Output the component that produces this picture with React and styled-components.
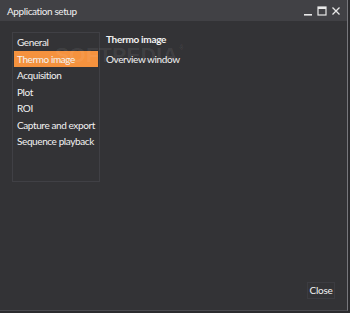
import React, { useState } from "react";
import styled, { createGlobalStyle } from "styled-components";

const Global = createGlobalStyle`
  html, body { margin: 0; padding: 0; background: #2b2b2e; }
  body { font-family: Lato, "Noto Sans", sans-serif; }
`;

const Window = styled.div`
  width: 347px;
  height: 310px;
  border-right: 1px solid #77777c;
  border-bottom: 1px solid #4a4a4f;
  background: #333336;
  display: flex;
  flex-direction: column;
  position: relative;
  overflow: hidden;
`;

const TitleBar = styled.div`
  height: 21px;
  background: #414145;
  display: flex;
  align-items: center;
  padding: 0 6px 0 7px;
  color: #f0f0f0;
  font-size: 10px;
  letter-spacing: -0.4px;
`;

const Title = styled.div`
  flex: 1;
  padding-top: 1px;
`;

const Controls = styled.div`
  display: flex;
  align-items: center;
  gap: 4px;
`;

const Body = styled.div`
  flex: 1;
  display: flex;
  padding: 11px 0 0 12px;
  gap: 6px;
  position: relative;
`;

const Nav = styled.div`
  width: 84px;
  height: 147px;
  border: 1px solid #404045;
  padding: 1px 1px 0 1px;
  display: flex;
  flex-direction: column;
`;

const NavItem = styled.div`
  height: 16.5px;
  line-height: 16.5px;
  padding-left: 3px;
  font-size: 10px;
  letter-spacing: -0.4px;
  color: #f2f2f2;
  white-space: nowrap;
  background: ${(p) => (p.$active ? "#f5923e" : "transparent")};
`;

const Content = styled.div`
  display: flex;
  flex-direction: column;
`;

const Heading = styled.div`
  font-size: 10px;
  letter-spacing: -0.3px;
  font-weight: 700;
  color: #f2f2f2;
  line-height: 14px;
`;

const Link = styled.div`
  font-size: 10px;
  letter-spacing: -0.4px;
  color: #f2f2f2;
  margin-top: 6px;
  line-height: 14px;
`;

const CloseButton = styled.button`
  position: absolute;
  right: 12px;
  bottom: 11px;
  height: 17px;
  width: 28px;
  padding: 0;
  background: #333336;
  border: 1px solid #3c3c41;
  color: #f2f2f2;
  font-family: inherit;
  font-size: 10px;
  letter-spacing: -0.3px;
  line-height: 15px;
`;

const Watermark = styled.div`
  position: absolute;
  left: 55px;
  top: 23px;
  font-family: "Liberation Sans", sans-serif;
  font-weight: 700;
  font-size: 21px;
  line-height: 21px;
  letter-spacing: 0.3px;
  color: rgba(255, 255, 255, 0.08);
  pointer-events: none;
  sup {
    font-size: 7px;
    vertical-align: top;
    line-height: 7px;
    margin-left: 1px;
  }
`;

const items = [
  "General",
  "Thermo image",
  "Acquisition",
  "Plot",
  "ROI",
  "Capture and export",
  "Sequence playback",
];

export default function App() {
  const [active, setActive] = useState(1);
  return (
    <>
      <Global />
      <Window>
        <TitleBar>
          <Title>Application setup</Title>
          <Controls>
            <svg width="10" height="10" viewBox="0 0 10 10">
              <rect x="1" y="8" width="8" height="1.6" fill="#e8e8e8" />
            </svg>
            <svg width="10" height="10" viewBox="0 0 10 10">
              <rect x="1" y="1" width="8" height="8" fill="none" stroke="#e8e8e8" strokeWidth="1.2" />
              <rect x="1" y="1" width="8" height="2" fill="#e8e8e8" />
            </svg>
            <svg width="10" height="10" viewBox="0 0 10 10">
              <path d="M1.5 1.5 L8.5 8.5 M8.5 1.5 L1.5 8.5" stroke="#e8e8e8" strokeWidth="1.3" />
            </svg>
          </Controls>
        </TitleBar>
        <Body>
          <Nav>
            {items.map((t, i) => (
              <NavItem key={t} $active={i === active} onClick={() => setActive(i)}>
                {t}
              </NavItem>
            ))}
          </Nav>
          <Content>
            <Heading>Thermo image</Heading>
            <Link>Overview window</Link>
          </Content>
          <Watermark>
            SOFTPEDIA<sup>®</sup>
          </Watermark>
        </Body>
        <CloseButton>Close</CloseButton>
      </Window>
    </>
  );
}
